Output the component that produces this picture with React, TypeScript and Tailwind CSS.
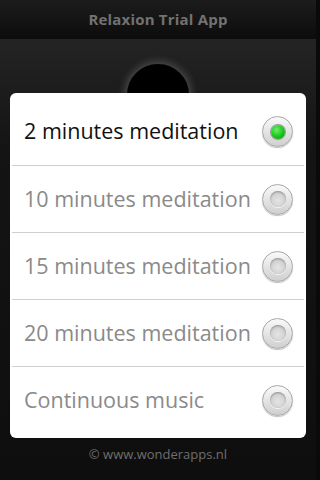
const options = [
  { label: "2 minutes meditation", checked: true },
  { label: "10 minutes meditation", checked: false },
  { label: "15 minutes meditation", checked: false },
  { label: "20 minutes meditation", checked: false },
  { label: "Continuous music", checked: false },
];

function Radio({ checked }: { checked: boolean }) {
  return (
    <div className="size-[31px] rounded-full border border-[#a8a8a8] bg-[linear-gradient(180deg,#fafafa,#cfcfcf)] shadow-[0_1px_1px_rgba(0,0,0,0.25)] flex items-center justify-center">
      {checked ? (
        <div className="size-[14px] rounded-full bg-[radial-gradient(circle_at_40%_35%,#6af06a,#12c012_60%,#0a9a0a)] shadow-[0_0_0_1px_#9a9a9a]" />
      ) : (
        <div className="size-[16px] rounded-full bg-[radial-gradient(circle_at_50%_60%,#e4e4e4,#c4c4c4)] shadow-[inset_0_1px_2px_rgba(0,0,0,0.3),0_1px_0_#f4f4f4]" />
      )}
    </div>
  );
}

export default function App() {
  return (
    <div className="w-[320px] h-[480px] flex bg-[#0a0a0a] overflow-hidden font-['Open_Sans','Noto_Sans',sans-serif]">
      <div className="w-[316px] flex flex-col">
        <header className="h-[39px] shrink-0 flex items-center justify-center bg-[linear-gradient(180deg,#1c1c1c,#0c0c0c)]">
          <span className="text-[15px] font-bold text-[#727272] tracking-[0.2px]">
            Relaxion Trial App
          </span>
        </header>

        <main className="relative flex-1 flex flex-col bg-[linear-gradient(180deg,#242424_0px,#141414_110px,#0e0e0e_100%)]">
          {/* play button behind the dialog */}
          <div className="absolute left-[125px] top-[23px] size-[66px] rounded-full bg-black border-2 border-[#3a3a3a] shadow-[0_0_6px_2px_rgba(120,120,120,0.35)]" />

          <div className="relative mt-[54px] mx-[10px] bg-white rounded-[6px] py-[5px]">
            {options.map((o, i) => (
              <div
                key={o.label}
                className={`h-[67px] mx-[2px] flex items-center justify-between pl-[12px] pr-[11px] ${
                  i > 0 ? "border-t border-[#cfcfcf]" : ""
                }`}
              >
                <span
                  className={`text-[21.5px] ${
                    o.checked ? "text-[#111]" : "text-[#8a8a8a]"
                  }`}
                >
                  {o.label}
                </span>
                <Radio checked={o.checked} />
              </div>
            ))}
          </div>

          <p className="mt-[7px] text-center text-[13px] text-[#6e6e6e]">
            © www.wonderapps.nl
          </p>
        </main>
      </div>
    </div>
  );
}
